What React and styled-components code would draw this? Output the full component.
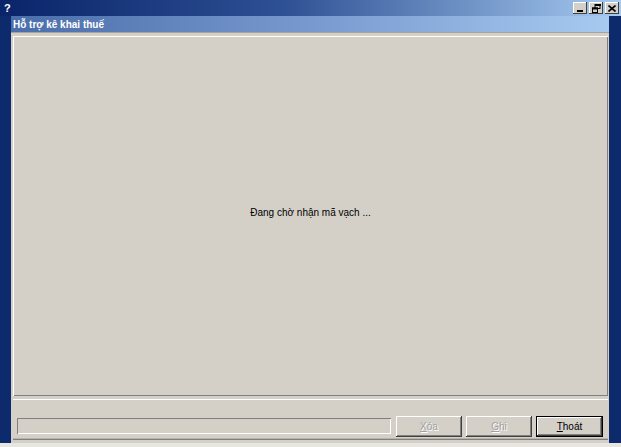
import styled, { createGlobalStyle } from "styled-components";

const GlobalStyle = createGlobalStyle`
  html, body { margin: 0; padding: 0; background: #d4d0c8; }
  body { font-family: "Liberation Sans", Arial, sans-serif; font-size: 10px; }
`;

const Frame = styled.div`
  width: 621px;
  height: 447px;
  display: flex;
  flex-direction: column;
  background: #0c2a6c;
  overflow: hidden;
`;

const Caption = styled.div`
  height: 16px;
  display: flex;
  align-items: center;
  padding: 0 2px 0 4px;
  background: linear-gradient(to right, #0a246a 0%, #2d4f93 45%, #a6caf0 100%);
`;

const HelpGlyph = styled.span`
  color: #fff;
  font-weight: bold;
  font-size: 11px;
  line-height: 11px;
  font-family: "Liberation Sans", Arial, sans-serif;
  flex: 1;
`;

const CapButtons = styled.div`
  display: flex;
  gap: 2px;
`;

const CapButton = styled.div`
  width: 14px;
  height: 12px;
  background: #d4d0c8;
  box-shadow: inset -1px -1px #404040, inset 1px 1px #fff;
  display: flex;
  align-items: center;
  justify-content: center;
`;

const Middle = styled.div`
  flex: 1;
  display: flex;
  padding: 0 12px 0 11px;
`;

const Bottom = styled.div`
  height: 4px;
  background: #e8e6e0;
`;

const Window = styled.div`
  flex: 1;
  display: flex;
  flex-direction: column;
  background: #d4d0c8;
`;

const WinTitle = styled.div`
  height: 16px;
  display: flex;
  align-items: center;
  padding-left: 2px;
  color: #fff;
  font-weight: bold;
  font-size: 10px;
  background: linear-gradient(to right, #4a6eaa 0%, #7899cf 50%, #a6caf0 100%);
  border-bottom: 1px solid #a8a49c;
`;

const Body = styled.div`
  flex: 1;
  display: flex;
  flex-direction: column;
  padding: 3px 1px 3px 2px;
`;

const Panel = styled.div`
  flex: 1;
  display: flex;
  align-items: center;
  justify-content: center;
  box-shadow: inset 1px 1px #fff, inset -1px -1px #808080;
  color: #000;
  padding-bottom: 8px;
`;

const Footer = styled.div`
  height: 41px;
  margin-top: 3px;
  display: flex;
  align-items: flex-end;
  gap: 4px;
  padding: 0 4px 3px 4px;
  box-sizing: border-box;
  box-shadow: inset 0 1px #fff, inset 0 -1px #808080, inset 0 -2px #b8b4ac;
`;

const Status = styled.div`
  width: 374px;
  height: 16px;
  margin: 0 1px 3px 0;
  box-shadow: inset 1px 1px #808080, inset -1px -1px #fff;
`;

const Button = styled.button`
  width: ${(p) => p.w || 66}px;
  height: 21px;
  font-family: "Liberation Sans", Arial, sans-serif;
  font-size: 10px;
  background: #d4d0c8;
  border: ${(p) => (p.primary ? "1px solid #000" : "none")};
  padding: 0;
  box-shadow: inset -1px -1px #404040, inset 1px 1px #fff, inset -2px -2px #808080;
  color: ${(p) => (p.disabled ? "#a0a0a0" : "#000")};
  text-shadow: ${(p) => (p.disabled ? "1px 1px #fff" : "none")};
`;

const Ul = styled.span`
  text-decoration: underline;
`;

export default function App() {
  return (
    <>
      <GlobalStyle />
      <Frame>
        <Caption>
          <HelpGlyph>?</HelpGlyph>
          <CapButtons>
            <CapButton>
              <svg width="8" height="8" viewBox="0 0 8 8">
                <rect x="1" y="6" width="6" height="2" fill="#000" />
              </svg>
            </CapButton>
            <CapButton>
              <svg width="9" height="9" viewBox="0 0 9 9">
                <rect x="3" y="0.5" width="5" height="4" fill="none" stroke="#000" />
                <rect x="3" y="0" width="6" height="2" fill="#000" />
                <rect x="0.5" y="4" width="5" height="4.5" fill="#d4d0c8" stroke="#000" />
                <rect x="0" y="3.5" width="6" height="2" fill="#000" />
              </svg>
            </CapButton>
            <CapButton>
              <svg width="8" height="7" viewBox="0 0 8 7">
                <path d="M0.5 0.5 L7.5 6.5 M7.5 0.5 L0.5 6.5" stroke="#000" strokeWidth="1.6" />
              </svg>
            </CapButton>
          </CapButtons>
        </Caption>
        <Middle>
          <Window>
            <WinTitle>Hỗ trợ kê khai thuế</WinTitle>
            <Body>
              <Panel>Đang chờ nhận mã vạch ...</Panel>
              <Footer>
                <Status />
                <Button disabled>
                  <Ul>X</Ul>óa
                </Button>
                <Button disabled>
                  <Ul>G</Ul>hi
                </Button>
                <Button primary w={67}>
                  <Ul>T</Ul>hoát
                </Button>
              </Footer>
            </Body>
          </Window>
        </Middle>
        <Bottom />
      </Frame>
    </>
  );
}
